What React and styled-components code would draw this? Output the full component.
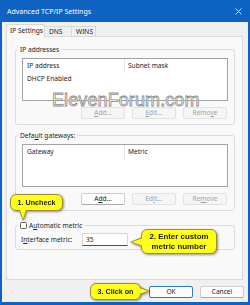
import React from 'react';
import styled, { createGlobalStyle, css } from 'styled-components';

const GlobalStyle = createGlobalStyle`
  html, body {
    margin: 0;
    padding: 0;
    overflow: hidden;
    background: #ffffff;
  }
`;

const UI_FONT = `"Noto Sans", "Open Sans", Arial, sans-serif`;
const BORDER = '#9a8c3c';
const YELLOW = '#ffff1a';

const Window = styled.div`
  position: relative;
  width: 250px;
  height: 305px;
  background: #0d62c2;
  display: flex;
  flex-direction: column;
  overflow: hidden;
  font-family: ${UI_FONT};
  color: #1b1b1b;
`;

const TitleBar = styled.div`
  height: 22px;
  flex: none;
  display: flex;
  align-items: center;
  justify-content: space-between;
  padding: 0 8px 0 7px;
  color: #ffffff;
  font-size: 7px;
`;

const Body = styled.div`
  flex: 1;
  margin: 0 2px 3px;
  background: #f0f0f0;
  padding: 2px 5px 0 4px;
  display: flex;
  flex-direction: column;
`;

const TabStrip = styled.div`
  height: 13px;
  margin-bottom: -1px;
  display: flex;
  align-items: flex-end;
  position: relative;
  z-index: 1;
`;

const Tab = styled.div`
  box-sizing: border-box;
  width: ${p => p.$w}px;
  height: ${p => (p.$active ? 13 : 11)}px;
  margin-left: ${p => (p.$first ? 0 : -1)}px;
  border: 1px solid #d9d9d9;
  border-bottom: ${p => (p.$active ? 'none' : '1px solid #d9d9d9')};
  background: ${p => (p.$active ? '#f9f9f9' : '#f0f0f0')};
  font-size: 6.6px;
  line-height: ${p => (p.$active ? 11 : 9)}px;
  padding-left: ${p => p.$pl}px;
  white-space: nowrap;
`;

const Panel = styled.div`
  box-sizing: border-box;
  height: 244px;
  flex: none;
  background: #f9f9f9;
  border: 1px solid #d9d9d9;
  padding: 8px 7px 0 8px;
  display: flex;
  flex-direction: column;
`;

const GroupBox = styled.fieldset`
  margin: ${p => p.$mt || 0}px 0 0;
  padding: 0;
  border: 1px solid #dcdcdc;
  border-radius: 3px;
  min-width: 0;
`;

const Legend = styled.legend`
  margin-left: 2px;
  padding: 0 2px;
  font-size: 6.6px;
  line-height: 9px;
  height: 9px;
  white-space: nowrap;

  u {
    text-decoration-thickness: 0.5px;
    text-underline-offset: 1px;
  }
`;

const CheckLabel = styled.span`
  display: flex;
  align-items: center;
  gap: 2px;
  height: 9px;
`;

const GroupInner = styled.div`
  padding: ${p => p.$pad};
  display: flex;
  flex-direction: column;
`;

const ListView = styled.div`
  box-sizing: border-box;
  height: 43px;
  background: #ffffff;
  border: 1px solid #a3a3a3;
  font-size: 6.6px;
`;

const ListRow = styled.div`
  display: flex;
  height: ${p => p.$h}px;
  line-height: ${p => p.$h}px;
`;

const Cell = styled.div`
  width: ${p => (p.$w ? `${p.$w}px` : 'auto')};
  flex: ${p => (p.$w ? 'none' : 1)};
  padding-left: ${p => (p.$first ? 4 : 3)}px;
  box-sizing: border-box;
  border-right: ${p => (p.$sep ? '1px solid #e6e6e6' : 'none')};
  white-space: nowrap;
`;

const ButtonRow = styled.div`
  display: flex;
  justify-content: flex-end;
  gap: 7px;
  margin-top: 6px;
  padding-right: ${p => p.$pr || 0}px;
`;

const Button = styled.button`
  box-sizing: border-box;
  width: 44px;
  height: 12px;
  padding: 0;
  border-radius: 2px;
  font-family: ${UI_FONT};
  font-size: 6.6px;
  line-height: 10px;
  color: ${p => (p.disabled ? '#a2a2a2' : '#1b1b1b')};
  background: ${p => (p.disabled ? '#f5f5f5' : '#fdfdfd')};
  border: 1px solid ${p => (p.$primary ? '#2f78c8' : p.disabled ? '#e2e2e2' : '#cdcdcd')};
  border-bottom-color: ${p => (p.$primary ? '#2f78c8' : p.disabled ? '#e2e2e2' : '#a9a9a9')};

  u {
    text-decoration-thickness: 0.5px;
    text-underline-offset: 1px;
  }
`;

const CheckBox = styled.span`
  box-sizing: border-box;
  width: 7px;
  height: 7px;
  border: 1px solid #5e5e5e;
  border-radius: 1.5px;
  background: #ffffff;
  display: inline-block;
  flex: none;
`;

const FieldRow = styled.div`
  display: flex;
  align-items: center;
  font-size: 6.6px;

  u {
    text-decoration-thickness: 0.5px;
    text-underline-offset: 1px;
  }
`;

const FieldLabel = styled.span`
  width: 61px;
  padding-left: 5px;
  flex: none;
`;

const MetricInput = styled.div`
  box-sizing: border-box;
  width: 46px;
  height: 13px;
  background: #ffffff;
  border: 1px solid #d6d6d6;
  border-bottom: 1px solid #0b5cb8;
  border-radius: 2px 2px 0 0;
  padding-left: 3px;
  line-height: 11px;
`;

const Footer = styled.div`
  display: flex;
  justify-content: flex-end;
  gap: 7px;
  margin-top: 6px;
  margin-right: -1px;
`;

const Watermark = styled.div`
  position: absolute;
  top: 93px;
  left: 52px;
  font-family: "Liberation Sans", Arial, sans-serif;
  font-size: 18px;
  line-height: 14px;
  letter-spacing: 0.1px;
  color: #ffffff;
  -webkit-text-stroke: 0.8px #8c8c8c;
  pointer-events: none;
  white-space: nowrap;
`;

const tails = {
  down: css`
    &::before {
      left: 8px;
      bottom: -11px;
      border-width: 11px 4.5px 0 4.5px;
      border-color: ${BORDER} transparent transparent transparent;
    }
    &::after {
      left: 9px;
      bottom: -9px;
      border-width: 9.5px 3.5px 0 3.5px;
      border-color: ${YELLOW} transparent transparent transparent;
    }
  `,
  left: css`
    &::before {
      left: -12px;
      top: 7px;
      border-width: 5px 12px 5px 0;
      border-color: transparent ${BORDER} transparent transparent;
    }
    &::after {
      left: -10px;
      top: 8px;
      border-width: 4px 11px 4px 0;
      border-color: transparent ${YELLOW} transparent transparent;
    }
  `,
  right: css`
    &::before {
      right: -10px;
      top: 3px;
      border-width: 4.5px 0 4.5px 10px;
      border-color: transparent transparent transparent ${BORDER};
    }
    &::after {
      right: -8px;
      top: 4px;
      border-width: 3.5px 0 3.5px 9px;
      border-color: transparent transparent transparent ${YELLOW};
    }
  `,
};

const Callout = styled.div`
  position: absolute;
  top: ${p => p.$top}px;
  left: ${p => p.$left}px;
  width: ${p => p.$w}px;
  height: ${p => p.$h}px;
  box-sizing: border-box;
  background: ${YELLOW};
  border: 1px solid ${BORDER};
  border-radius: 6px;
  display: flex;
  align-items: center;
  justify-content: center;
  text-align: center;
  font-family: "Liberation Sans", Arial, sans-serif;
  font-weight: bold;
  font-size: ${p => p.$fs}px;
  line-height: 10px;
  color: #1a1a1a;
  filter: drop-shadow(1px 1px 0.8px rgba(0, 0, 0, 0.4));
  z-index: 5;

  &::before,
  &::after {
    content: '';
    position: absolute;
    width: 0;
    height: 0;
    border-style: solid;
  }

  ${p => tails[p.$tail]}
`;

const CloseIcon = () => (
  <svg width="7" height="7" viewBox="0 0 7 7">
    <path d="M0.5 0.5 L6.5 6.5 M6.5 0.5 L0.5 6.5" stroke="#ffffff" strokeWidth="0.8" fill="none" />
  </svg>
);

function AddressList({ cols, rows }) {
  return (
    <ListView>
      <ListRow $h={14}>
        <Cell $w={102} $first $sep>{cols[0]}</Cell>
        <Cell>{cols[1]}</Cell>
      </ListRow>
      {rows.map(r => (
        <ListRow key={r} $h={12}>
          <Cell $w={102} $first>{r}</Cell>
        </ListRow>
      ))}
    </ListView>
  );
}

export default function App() {
  return (
    <>
      <GlobalStyle />
      <Window>
        <TitleBar>
          <span>Advanced TCP/IP Settings</span>
          <CloseIcon />
        </TitleBar>
        <Body>
          <TabStrip>
            <Tab $w={39} $pl={3} $active $first>IP Settings</Tab>
            <Tab $w={28} $pl={4}>DNS</Tab>
            <Tab $w={25} $pl={4}>WINS</Tab>
          </TabStrip>
          <Panel>
            <GroupBox>
              <Legend>IP addresses</Legend>
              <GroupInner $pad="4px 6px 5px 6px">
                <AddressList cols={['IP address', 'Subnet mask']} rows={['DHCP Enabled']} />
                <ButtonRow $pr={1}>
                  <Button disabled><u>A</u>dd...</Button>
                  <Button disabled><u>E</u>dit...</Button>
                  <Button disabled>Remo<u>v</u>e</Button>
                </ButtonRow>
              </GroupInner>
            </GroupBox>
            <GroupBox $mt={6}>
              <Legend>Defa<u>u</u>lt gateways:</Legend>
              <GroupInner $pad="4px 6px 5px 6px">
                <AddressList cols={['Gateway', 'Metric']} rows={[]} />
                <ButtonRow $pr={1}>
                  <Button>A<u>d</u>d...</Button>
                  <Button disabled>Ed<u>i</u>t...</Button>
                  <Button disabled>Re<u>m</u>ove</Button>
                </ButtonRow>
              </GroupInner>
            </GroupBox>
            <GroupBox $mt={10}>
              <Legend>
                <CheckLabel>
                  <CheckBox />
                  <span>A<u>u</u>tomatic metric</span>
                </CheckLabel>
              </Legend>
              <GroupInner $pad="3px 6px 3px 0">
                <FieldRow>
                  <FieldLabel>I<u>n</u>terface metric:</FieldLabel>
                  <MetricInput>35</MetricInput>
                </FieldRow>
              </GroupInner>
            </GroupBox>
          </Panel>
          <Footer>
            <Button $primary>OK</Button>
            <Button>Cancel</Button>
          </Footer>
        </Body>

        <Watermark>ElevenForum.com</Watermark>

        <Callout $top={194} $left={10} $w={53} $h={17} $fs={7.2} $tail="down">1. Uncheck</Callout>
        <Callout $top={229} $left={141} $w={76} $h={25} $fs={7.9} $tail="left">
          2. Enter custom<br />metric number
        </Callout>
        <Callout $top={283} $left={90} $w={51} $h={17} $fs={7.2} $tail="right">3. Click on</Callout>
      </Window>
    </>
  );
}
